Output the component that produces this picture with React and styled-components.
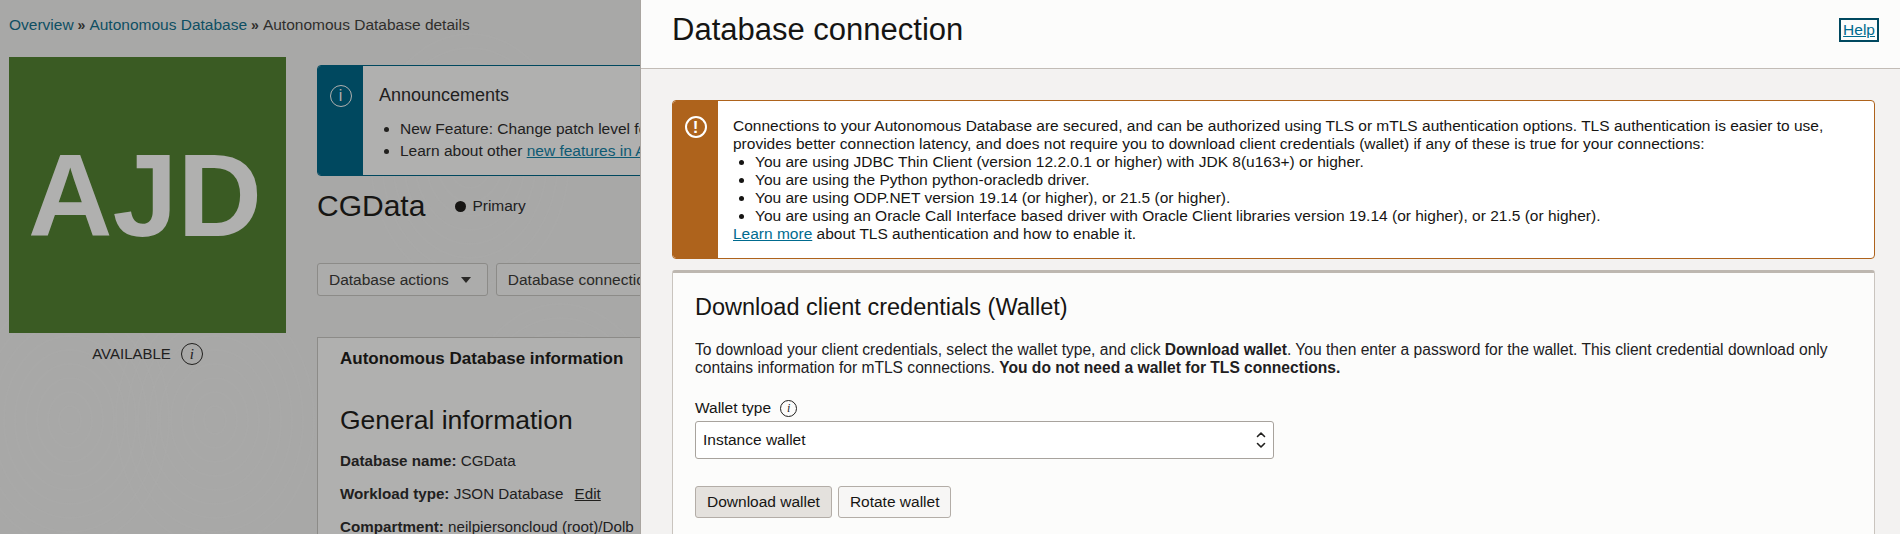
import React from "react";
import styled, { createGlobalStyle } from "styled-components";

const Global = createGlobalStyle`
  html, body { margin: 0; padding: 0; height: 100%; overflow: hidden; }
  body { font-family: "Liberation Sans", Arial, sans-serif; font-size: 15.5px; color: #161513; background: #a8a8a7; }
  * { box-sizing: border-box; }
`;

const Page = styled.div`
  display: flex;
  width: 1900px;
  height: 534px;
  overflow: hidden;
`;

const Backdrop = styled.div`
  position: relative;
  flex: 0 0 640px;
  width: 640px;
  height: 534px;
  overflow: hidden;
  background: #a8a8a7;
  color: #21201e;
  white-space: nowrap;
`;

const Texture = styled.svg`
  position: absolute;
  inset: 0;
  width: 640px;
  height: 534px;
  pointer-events: none;
`;

const Crumbs = styled.nav`
  position: relative;
  display: flex;
  align-items: center;
  gap: 4px;
  height: 18px;
  margin: 16px 0 23px 9px;
  line-height: 18px;
  color: #2f2e2c;
`;

const CrumbLink = styled.span`
  color: #0e4f63;
`;

const CrumbSep = styled.span`
  font-size: 14px;
  font-weight: 700;
  color: #2f2e2c;
`;

const Columns = styled.div`
  position: relative;
  display: flex;
  padding-left: 9px;
`;

const Side = styled.aside`
  flex: 0 0 277px;
  display: flex;
  flex-direction: column;
  align-items: center;
`;

const Avatar = styled.div`
  display: flex;
  align-items: center;
  justify-content: center;
  width: 277px;
  height: 276px;
  padding-right: 5px;
  background: #3a5b23;
  color: #b0b0af;
  font-size: 117px;
  font-weight: 700;
`;

const Status = styled.div`
  display: flex;
  align-items: center;
  gap: 10px;
  margin-top: 9px;
  height: 24px;
  font-size: 15px;
  line-height: 24px;
`;

const InfoBadge = styled.span`
  display: inline-flex;
  align-items: center;
  justify-content: center;
  flex: none;
  width: ${(p) => p.$size}px;
  height: ${(p) => p.$size}px;
  border: ${(p) => p.$stroke || 1.5}px solid ${(p) => p.$color || "#21201e"};
  border-radius: 50%;
  color: ${(p) => p.$color || "#21201e"};
  font-family: ${(p) => (p.$italic ? '"Liberation Serif", serif' : '"Liberation Sans", sans-serif')};
  font-style: ${(p) => (p.$italic ? "italic" : "normal")};
  font-weight: ${(p) => (p.$bold ? 700 : 400)};
  font-size: ${(p) => p.$font}px;
  line-height: 1;
`;

const Main = styled.main`
  flex: none;
  width: 700px;
  margin-left: 31px;
  padding-top: 8px;
`;

const Announce = styled.section`
  display: flex;
  height: 111px;
  border: 1px solid #00485f;
  border-radius: 4px;
  background: #b0b0af;
`;

const Band = styled.div`
  flex: 0 0 ${(p) => p.$width}px;
  display: flex;
  justify-content: center;
  padding-top: ${(p) => p.$top}px;
  background: ${(p) => p.$color};
  border-radius: 3px 0 0 3px;
`;

const AnnounceBody = styled.div`
  padding: 17px 0 0 16px;
`;

const AnnounceTitle = styled.h3`
  margin: 0 0 11px;
  font-size: 18px;
  font-weight: 400;
  line-height: 24px;
`;

const AnnounceList = styled.ul`
  margin: 0;
  padding-left: 21px;
  line-height: 22px;
`;

const Anchor = styled.a`
  color: ${(p) => p.$color || "#006b8f"};
  text-decoration: underline;
`;

const TitleRow = styled.div`
  display: flex;
  align-items: center;
  height: 36px;
  margin-top: 12px;
`;

const DbTitle = styled.h1`
  margin: 0 30px 0 0;
  font-size: 30px;
  font-weight: 400;
  line-height: 36px;
  color: #161513;
`;

const Dot = styled.span`
  width: 11px;
  height: 11px;
  margin-right: 6px;
  border-radius: 50%;
  background: #161513;
`;

const ActionRow = styled.div`
  display: flex;
  gap: 8px;
  margin-top: 39px;
`;

const GhostButton = styled.button`
  display: inline-flex;
  align-items: center;
  gap: 12px;
  height: 33px;
  padding: 0 ${(p) => (p.$menu ? 16 : 11)}px 0 11px;
  border: 1px solid #8c8b88;
  border-radius: 3px;
  background: #acacab;
  color: #2a2927;
  font: inherit;
`;

const Caret = styled.span`
  width: 0;
  height: 0;
  border-left: 5px solid transparent;
  border-right: 5px solid transparent;
  border-top: 6px solid #2a2927;
`;

const InfoPanel = styled.section`
  margin-top: 41px;
  padding: 10px 22px 0;
  height: 260px;
  border: 1px solid #8c8b88;
  background: #b0b0af;
`;

const PanelTab = styled.div`
  font-size: 17px;
  font-weight: 700;
  line-height: 21px;
  color: #161513;
`;

const GeneralTitle = styled.h2`
  margin: 35px 0 16px;
  font-size: 26.5px;
  font-weight: 400;
  line-height: 32px;
  color: #161513;
`;

const Field = styled.div`
  height: 33px;
  font-size: 15.2px;
  line-height: 18px;
`;

const EditLink = styled.span`
  margin-left: 7px;
  text-decoration: underline;
`;

const Drawer = styled.div`
  flex: 1;
  height: 534px;
  overflow: hidden;
  border-left: 1px solid #a9a5a0;
  background: #f3f2f1;
`;

const DrawerHeader = styled.header`
  display: flex;
  align-items: center;
  justify-content: space-between;
  height: 69px;
  padding: 0 21px 8px 31px;
  border-bottom: 1px solid #c2bcb6;
  background: #fcfcfb;
`;

const DrawerTitle = styled.h1`
  margin: 0;
  font-size: 31px;
  font-weight: 400;
  line-height: 36px;
`;

const HelpLink = styled.a`
  display: block;
  padding: 0 2px;
  height: 24px;
  border: 2px solid #00485f;
  color: #006b8f;
  line-height: 20px;
  text-decoration: underline;
`;

const DrawerBody = styled.div`
  padding: 31px 25px 0 31px;
`;

const Alert = styled.section`
  display: flex;
  height: 159px;
  border: 1px solid #ae631c;
  border-radius: 4px;
  background: #fff;
  overflow: hidden;
`;

const AlertBody = styled.div`
  padding: 16px 0 0 15px;
  line-height: 18px;
`;

const BulletList = styled.ul`
  margin: 0;
  padding-left: 22px;
`;

const Card = styled.section`
  margin-top: 11px;
  height: 300px;
  padding: 20px 22px 0;
  border: 1px solid #c9c4be;
  border-top: 3px solid #bdb7b0;
  border-radius: 3px 3px 0 0;
  background: #fcfcfb;
`;

const CardTitle = styled.h2`
  margin: 0 0 20px;
  font-size: 23.5px;
  font-weight: 400;
  line-height: 28px;
`;

const Para = styled.p`
  margin: 0;
  font-size: 15.6px;
  line-height: 18px;
  color: #21201e;
`;

const LabelRow = styled.div`
  display: flex;
  align-items: center;
  gap: 9px;
  height: 18px;
  margin-top: 22px;
  line-height: 18px;
`;

const SelectBox = styled.div`
  display: flex;
  align-items: center;
  justify-content: space-between;
  width: 579px;
  height: 38px;
  margin-top: 4px;
  padding: 0 6px 0 7px;
  border: 1px solid #a8a39d;
  border-radius: 3px;
  background: #fff;
`;

const ButtonRow = styled.div`
  display: flex;
  gap: 6px;
  margin-top: 27px;
`;

const WalletButton = styled.button`
  height: 32px;
  padding: 0 11px;
  border: 1px solid #b3ada7;
  border-radius: 3px;
  background: ${(p) => (p.$active ? "#e4e1dd" : "#f7f6f5")};
  color: #161513;
  font: inherit;
`;

const Swirls = () => {
  const rings = [];
  [[70, 420], [215, 420], [470, 160], [560, 430]].forEach(([cx, cy], c) => {
    for (let r = 1; r <= 9; r++) {
      rings.push(
        <ellipse key={`${c}-${r}`} cx={cx} cy={cy} rx={r * 11} ry={r * 14} fill="none" stroke="#b4b4b3" strokeOpacity="0.14" strokeWidth="2" />
      );
    }
  });
  return <Texture viewBox="0 0 640 534" aria-hidden="true">{rings}</Texture>;
};

const UpDown = () => (
  <svg width="12" height="18" viewBox="0 0 12 18" fill="none" stroke="#21201e" strokeWidth="1.6" strokeLinecap="round" strokeLinejoin="round">
    <path d="M2.5 5.5 6 2l3.5 3.5" />
    <path d="M2.5 12.5 6 16l3.5-3.5" />
  </svg>
);

export default function App() {
  return (
    <Page>
      <Global />
      <Backdrop>
        <Swirls />
        <Crumbs>
          <CrumbLink>Overview</CrumbLink>
          <CrumbSep>»</CrumbSep>
          <CrumbLink>Autonomous Database</CrumbLink>
          <CrumbSep>»</CrumbSep>
          <span>Autonomous Database details</span>
        </Crumbs>
        <Columns>
          <Side>
            <Avatar>AJD</Avatar>
            <Status>
              AVAILABLE
              <InfoBadge $size={22} $font={15} $italic>i</InfoBadge>
            </Status>
          </Side>
          <Main>
            <Announce>
              <Band $width={45} $top={19} $color="#00485f">
                <InfoBadge $size={22} $font={16} $color="#b0b0af">i</InfoBadge>
              </Band>
              <AnnounceBody>
                <AnnounceTitle>Announcements</AnnounceTitle>
                <AnnounceList>
                  <li>New Feature: Change patch level for</li>
                  <li>Learn about other <Anchor $color="#0e5a73">new features in A</Anchor></li>
                </AnnounceList>
              </AnnounceBody>
            </Announce>
            <TitleRow>
              <DbTitle>CGData</DbTitle>
              <Dot />
              Primary
            </TitleRow>
            <ActionRow>
              <GhostButton $menu>Database actions <Caret /></GhostButton>
              <GhostButton>Database connection</GhostButton>
            </ActionRow>
            <InfoPanel>
              <PanelTab>Autonomous Database information</PanelTab>
              <GeneralTitle>General information</GeneralTitle>
              <Field><b>Database name:</b> CGData</Field>
              <Field><b>Workload type:</b> JSON Database <EditLink>Edit</EditLink></Field>
              <Field><b>Compartment:</b> neilpiersoncloud (root)/Dolb</Field>
            </InfoPanel>
          </Main>
        </Columns>
      </Backdrop>
      <Drawer>
        <DrawerHeader>
          <DrawerTitle>Database connection</DrawerTitle>
          <HelpLink>Help</HelpLink>
        </DrawerHeader>
        <DrawerBody>
          <Alert>
            <Band $width={45} $top={15} $color="#ae631c">
              <InfoBadge $size={22} $font={17} $stroke={2} $color="#fff" $bold>!</InfoBadge>
            </Band>
            <AlertBody>
              Connections to your Autonomous Database are secured, and can be authorized using TLS or mTLS authentication options. TLS authentication is easier to use,<br />
              provides better connection latency, and does not require you to download client credentials (wallet) if any of these is true for your connections:
              <BulletList>
                <li>You are using JDBC Thin Client (version 12.2.0.1 or higher) with JDK 8(u163+) or higher.</li>
                <li>You are using the Python python-oracledb driver.</li>
                <li>You are using ODP.NET version 19.14 (or higher), or 21.5 (or higher).</li>
                <li>You are using an Oracle Call Interface based driver with Oracle Client libraries version 19.14 (or higher), or 21.5 (or higher).</li>
              </BulletList>
              <Anchor>Learn more</Anchor> about TLS authentication and how to enable it.
            </AlertBody>
          </Alert>
          <Card>
            <CardTitle>Download client credentials (Wallet)</CardTitle>
            <Para>
              To download your client credentials, select the wallet type, and click <b>Download wallet</b>. You then enter a password for the wallet. This client credential download only<br />
              contains information for mTLS connections. <b>You do not need a wallet for TLS connections.</b>
            </Para>
            <LabelRow>
              Wallet type
              <InfoBadge $size={17} $font={12} $stroke={1} $italic>i</InfoBadge>
            </LabelRow>
            <SelectBox>
              Instance wallet
              <UpDown />
            </SelectBox>
            <ButtonRow>
              <WalletButton $active>Download wallet</WalletButton>
              <WalletButton>Rotate wallet</WalletButton>
            </ButtonRow>
          </Card>
        </DrawerBody>
      </Drawer>
    </Page>
  );
}
